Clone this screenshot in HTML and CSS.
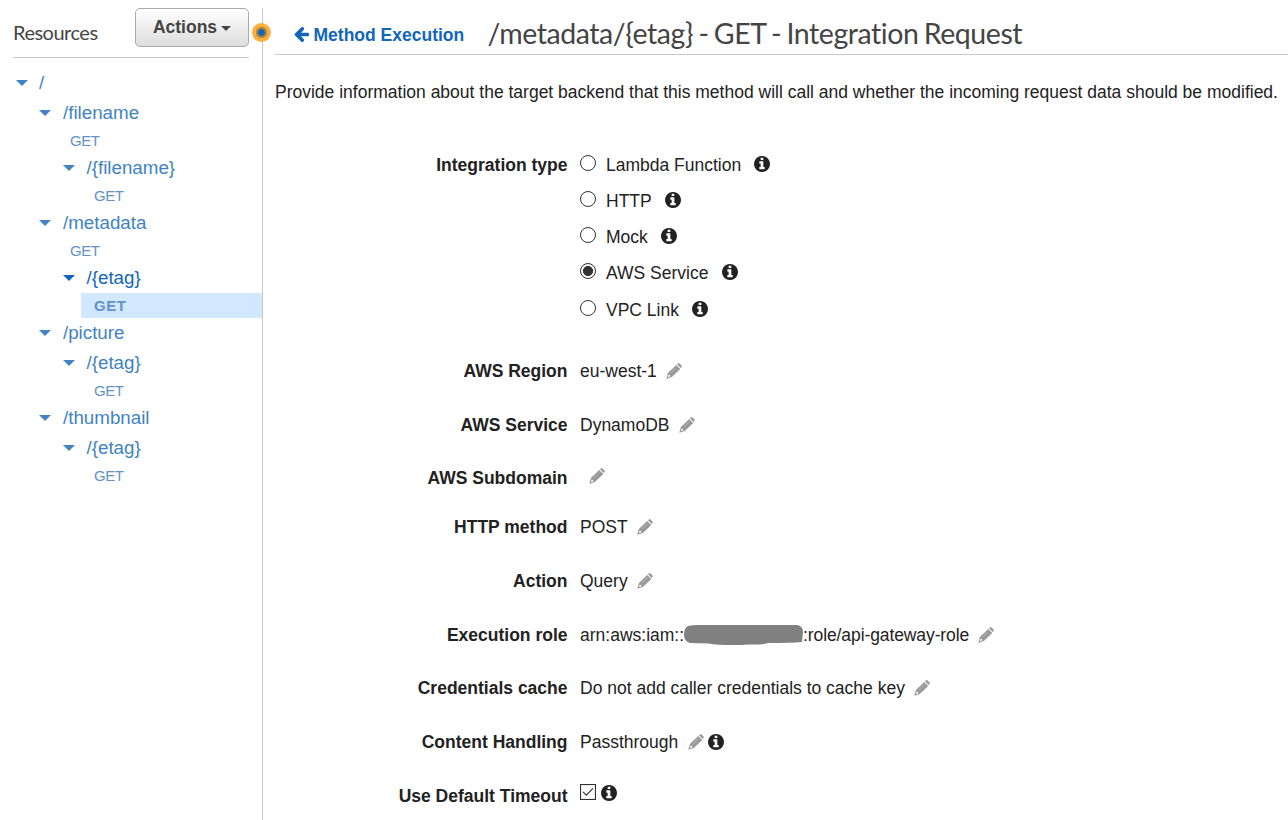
FILE: index.html
```html
<!DOCTYPE html>
<html lang="en">
<head>
<meta charset="utf-8">
<title>Integration Request</title>
<link rel="stylesheet" href="styles.css">
</head>
<body>
<svg class="defs" width="0" height="0" aria-hidden="true">
  <symbol id="info" viewBox="0 128 1536 1536"><path d="M1024 1376v-160q0-14-9-23t-23-9h-96v-512q0-14-9-23t-23-9h-320q-14 0-23 9t-9 23v160q0 14 9 23t23 9h96v320h-96q-14 0-23 9t-9 23v160q0 14 9 23t23 9h448q14 0 23-9t9-23zm-128-896v-160q0-14-9-23t-23-9h-192q-14 0-23 9t-9 23v160q0 14 9 23t23 9h192q14 0 23-9t9-23zm640 416q0 209-103 385.5t-279.5 279.5-385.5 103-385.5-103-279.5-279.5-103-385.5 103-385.5 279.5-279.5 385.5-103 385.5 103 279.5 279.5 103 385.5z"/></symbol>
  <symbol id="pencil" viewBox="0 0 16 16"><path fill-rule="evenodd" d="M11 1.200l.9-.8q.8-.7 1.600 0l2 2q.7.800 0 1.600l-.9.900zM10.200 1.900l4 4-8.300 8.200L.3 15.700l1.600-5.700zM2.600 11.800l-.7 2.300 2.300-.7-.1-1.300z"/><path class="shine" d="M4.600 10.200L10.500 4.400"/></symbol>
  <symbol id="arrow" viewBox="0 190 1536 1540"><path d="M1536 896v128q0 53-32.5 90.5t-84.500 37.500h-704l293 294q38 36 38 90t-38 90l-75 76q-37 37-90 37-52 0-91-37l-651-652q-37-37-37-90 0-52 37-91l651-650q38-38 91-38 52 0 90 38l75 74q38 38 38 91t-38 91l-293 293h704q52 0 84.500 37.500t32.500 90.500z"/></symbol>
</svg>
<div class="app">
  <aside class="sidebar">
    <div class="side-head">
      <h2 class="side-title">Resources</h2>
      <button class="actions"><span>Actions</span><i class="caret"></i></button>
    </div>
    <div class="tree">
      <div class="node root"><i class="tri"></i><span>/</span></div>
      <div class="node l1"><i class="tri"></i><span>/filename</span></div>
      <div class="method m1">GET</div>
      <div class="node l2"><i class="tri"></i><span>/{filename}</span></div>
      <div class="method m2">GET</div>
      <div class="node l1"><i class="tri"></i><span>/metadata</span></div>
      <div class="method m1">GET</div>
      <div class="node l2 current"><i class="tri"></i><span>/{etag}</span></div>
      <div class="method m2 selected">GET</div>
      <div class="node l1"><i class="tri"></i><span>/picture</span></div>
      <div class="node l2"><i class="tri"></i><span>/{etag}</span></div>
      <div class="method m2">GET</div>
      <div class="node l1"><i class="tri"></i><span>/thumbnail</span></div>
      <div class="node l2"><i class="tri"></i><span>/{etag}</span></div>
      <div class="method m2">GET</div>
    </div>
    <i class="handle"></i>
  </aside>
  <main class="main">
    <header class="head">
      <a class="back"><svg class="arrow"><use href="#arrow"/></svg><span>Method Execution</span></a>
      <h1 class="title">/metadata/{etag} - GET - Integration Request</h1>
    </header>
    <p class="intro">Provide information about the target backend that this method will call and whether the incoming request data should be modified.</p>
    <div class="form">
      <div class="row types">
        <div class="label">Integration type</div>
        <div class="options">
          <div class="option"><i class="radio"></i><span>Lambda Function</span><svg class="info"><use href="#info"/></svg></div>
          <div class="option"><i class="radio"></i><span>HTTP</span><svg class="info"><use href="#info"/></svg></div>
          <div class="option"><i class="radio"></i><span>Mock</span><svg class="info"><use href="#info"/></svg></div>
          <div class="option last-pair"><i class="radio on"></i><span>AWS Service</span><svg class="info"><use href="#info"/></svg></div>
          <div class="option"><i class="radio"></i><span>VPC Link</span><svg class="info"><use href="#info"/></svg></div>
        </div>
      </div>
      <div class="row"><div class="label">AWS Region</div><div class="value"><span>eu-west-1</span><svg class="pencil"><use href="#pencil"/></svg></div></div>
      <div class="row tight"><div class="label">AWS Service</div><div class="value"><span>DynamoDB</span><svg class="pencil"><use href="#pencil"/></svg></div></div>
      <div class="row short"><div class="label">AWS Subdomain</div><div class="value"><svg class="pencil"><use href="#pencil"/></svg></div></div>
      <div class="row"><div class="label">HTTP method</div><div class="value"><span>POST</span><svg class="pencil"><use href="#pencil"/></svg></div></div>
      <div class="row"><div class="label">Action</div><div class="value"><span>Query</span><svg class="pencil"><use href="#pencil"/></svg></div></div>
      <div class="row tight"><div class="label">Execution role</div><div class="value"><span>arn:aws:iam::</span><svg class="redact" viewBox="0 0 120 22"><path d="M4 1Q8 0 14 0H113Q119 1 119 7L118 17Q108 18 84 18Q80 20 66 19.500Q40 21 24 18.500L6 18Q0 16 0 10Q0 3 4 1Z"/></svg><span class="role">:role/api-gateway-role</span><svg class="pencil"><use href="#pencil"/></svg></div></div>
      <div class="row"><div class="label">Credentials cache</div><div class="value"><span>Do not add caller credentials to cache key</span><svg class="pencil"><use href="#pencil"/></svg></div></div>
      <div class="row"><div class="label">Content Handling</div><div class="value"><span>Passthrough</span><svg class="pencil"><use href="#pencil"/></svg><svg class="info near"><use href="#info"/></svg></div></div>
      <div class="row"><div class="label">Use Default Timeout</div><div class="value check"><svg class="checkbox" viewBox="0 0 16 16"><rect x=".5" y=".5" width="15" height="15"/><path d="M3 7.800l3.300 3.300L13 4.400"/></svg><svg class="info near"><use href="#info"/></svg></div></div>
    </div>
  </main>
</div>
</body>
</html>
```
FILE: styles.css
```css
* { box-sizing: border-box; }
body {
  margin: 0;
  background: #fff;
  color: #222;
  font-family: "Liberation Sans", Arial, sans-serif;
  font-size: 17.5px;
  overflow: hidden;
}
.defs { position: absolute; }
.app { display: flex; height: 820px; padding-top: 8px; }
h1, h2, p { margin: 0; font-weight: 400; }
span, .label, .intro, .title { white-space: nowrap; }

.sidebar {
  position: relative;
  width: 263px;
  flex: none;
  border-right: 1px solid #c8c8c8;
}
.side-head {
  display: flex;
  justify-content: space-between;
  margin: 0 13px 0 13px;
  height: 50px;
  border-bottom: 1px solid #c8c8c8;
}
.side-title {
  font: 400 20px/49px Lato, sans-serif;
  letter-spacing: -.5px;
  color: #444;
}
.actions {
  display: flex;
  align-items: center;
  justify-content: center;
  gap: 4px;
  width: 114px;
  height: 39px;
  padding: 0 0 1px;
  border: 1px solid #aaa;
  border-radius: 5px;
  background: linear-gradient(#fff, #ddd);
  color: #444;
  font: 700 17.5px "Liberation Sans", Arial, sans-serif;
}
.caret {
  border: 5px solid transparent;
  border-top-color: #444;
  border-bottom: 0;
  margin-top: 3px;
}
.handle {
  position: absolute;
  right: -9px;
  top: 15px;
  width: 19px;
  height: 19px;
  border-radius: 50%;
  background: radial-gradient(circle, #1166bb 0 3px, #b18438 3.800px 5.300px, #fbb040 6px);
}

.tree { padding-top: 10px; }
.node {
  display: flex;
  align-items: center;
  height: 30px;
  color: #4183c4;
  font-size: 18.750px;
}
.tri {
  border: 6px solid transparent;
  border-top-color: currentColor;
  border-bottom: 0;
  margin: -1px 11px 0 0;
}
.root { padding-left: 16px; }
.l1 { padding-left: 39.400px; }
.l1 .tri { margin-right: 11.600px; }
.l2 { padding-left: 63.200px; }
.l2 .tri { margin-right: 11.300px; }
.method {
  height: 25px;
  color: #6293c4;
  font-size: 15px;
  letter-spacing: -.4px;
  line-height: 25px;
}
.m1 { padding-left: 70px; }
.m2 { margin-left: 81px; padding-left: 13px; }
.current { color: #1166bb; }
.selected { background: #d1e8ff; font-weight: 700; letter-spacing: .6px; }

.main { flex: 1; min-width: 0; padding-left: 12px; }
.head {
  display: flex;
  height: 47px;
  border-bottom: 1px solid #c8c8c8;
}
.back {
  display: flex;
  align-items: center;
  gap: 5px;
  width: 212.500px;
  padding: 8px 0 0 18.500px;
  color: #1166bb;
  font-weight: 700;
}
.arrow { width: 15px; height: 15px; margin-top: -1px; fill: currentColor; }
.title {
  font: 400 28.500px/50px Lato, sans-serif;
  letter-spacing: -.43px;
  word-spacing: -1.600px;
  color: #444;
}
.intro { padding-top: 24px; line-height: 26px; }

.form { padding-top: 47px; }
.row { display: flex; height: 54px; line-height: 26px; }
.row.tight { height: 53px; }
.row.short { height: 49px; }
.row.types { height: 206px; }
.label { width: 292.500px; margin-right: 12.500px; text-align: right; font-weight: 700; flex: none; }
.option { display: flex; align-items: center; height: 26px; margin-bottom: 10px; }
.last-pair { margin-bottom: 11px; }
.radio {
  width: 16px;
  height: 16px;
  margin: -4px 10px 0 0;
  border: 1px solid #333;
  border-radius: 50%;
}
.radio.on { background: radial-gradient(circle, #333 0 4.700px, #fff 5.300px); }
.info { width: 16px; height: 16px; margin: -2px 0 0 13.200px; fill: #222; }
.info.near { margin: -1px 0 0 4.500px; }
.value { display: flex; align-items: center; height: 26px; }
.pencil { width: 16px; height: 16px; margin-left: 9.300px; fill: #999; }
.shine { fill: none; stroke: #c4c4c4; stroke-width: .7px; }
.short .value { height: 22px; }
.redact { width: 120px; height: 22px; margin-top: 2px; fill: #808080; }
.role { margin-left: -1px; letter-spacing: -.1px; }
.check { height: 19px; }
.check .near { margin-top: 0; }
.checkbox { width: 16px; height: 16px; margin-top: -2px; fill: none; stroke: #333; stroke-width: 1.200px; }
```
